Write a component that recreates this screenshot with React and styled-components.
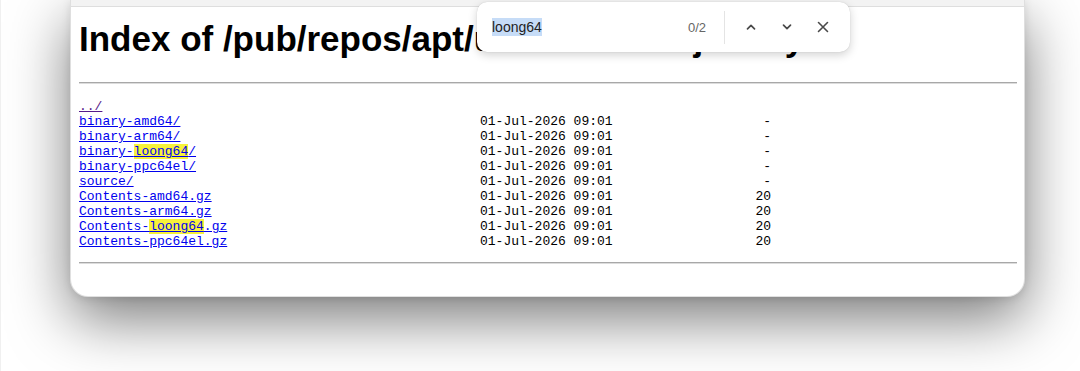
import React from 'react'
import styled, { createGlobalStyle } from 'styled-components'

const GlobalStyle = createGlobalStyle`
	html, body {
		margin: 0;
		padding: 0;
		background: #ffffff;
	}
`

const entries = [
	{ name: '../', visited: true },
	{ name: 'binary-amd64/', date: '01-Jul-2026 09:01', size: '-' },
	{ name: 'binary-arm64/', date: '01-Jul-2026 09:01', size: '-' },
	{ name: 'binary-', match: 'loong64', rest: '/', date: '01-Jul-2026 09:01', size: '-' },
	{ name: 'binary-ppc64el/', date: '01-Jul-2026 09:01', size: '-' },
	{ name: 'source/', date: '01-Jul-2026 09:01', size: '-' },
	{ name: 'Contents-amd64.gz', date: '01-Jul-2026 09:01', size: '20' },
	{ name: 'Contents-arm64.gz', date: '01-Jul-2026 09:01', size: '20' },
	{ name: 'Contents-', match: 'loong64', rest: '.gz', date: '01-Jul-2026 09:01', size: '20' },
	{ name: 'Contents-ppc64el.gz', date: '01-Jul-2026 09:01', size: '20' },
]

const ChevronUp = () => (
	<svg width="14" height="14" viewBox="0 0 14 14" fill="none">
		<path d="M3.5 8.8 L7 5.3 L10.5 8.8" stroke="#4a4a4a" strokeWidth="1.7" strokeLinecap="round" strokeLinejoin="round"/>
	</svg>
)

const ChevronDown = () => (
	<svg width="14" height="14" viewBox="0 0 14 14" fill="none">
		<path d="M3.5 5.2 L7 8.7 L10.5 5.2" stroke="#4a4a4a" strokeWidth="1.7" strokeLinecap="round" strokeLinejoin="round"/>
	</svg>
)

const CloseIcon = () => (
	<svg width="14" height="14" viewBox="0 0 14 14" fill="none">
		<path d="M2.5 2.5 L11.5 11.5 M11.5 2.5 L2.5 11.5" stroke="#4a4a4a" strokeWidth="1.6" strokeLinecap="round"/>
	</svg>
)

const App = () => {
	return (
		<Screen>
			<GlobalStyle/>
			<Window>
				<TopStrip/>
				<Page>
					<Heading>Index of /pub/repos/apt/ubuntu/dists/jammy/</Heading>
					<Rule/>
					<Listing>
						{entries.map((e, i) => (
							<Row key={i}>
								<Name>
									<FileLink href="#" $visited={e.visited}>
										{e.name}
										{e.match && <Hit>{e.match}</Hit>}
										{e.rest}
									</FileLink>
								</Name>
								<Date>{e.date}</Date>
								<Size>{e.size}</Size>
							</Row>
						))}
					</Listing>
					<Rule $gap={13}/>
				</Page>
			</Window>
			<FindBar>
				<Query><Selected>loong64</Selected></Query>
				<Count>0/2</Count>
				<Divider/>
				<IconButton><ChevronUp/></IconButton>
				<IconButton><ChevronDown/></IconButton>
				<IconButton><CloseIcon/></IconButton>
			</FindBar>
		</Screen>
	)
}

const Screen = styled.div`
	position: relative;
	width: 1080px;
	height: 371px;
	overflow: hidden;
	background: #ffffff;
	border-left: 1px solid #f0f0f0;
	box-sizing: border-box;
`

const Window = styled.div`
	margin-left: 69px;
	width: 955px;
	height: 297px;
	box-sizing: border-box;
	background: #ffffff;
	border: 1px solid rgba(0, 0, 0, 0.12);
	border-top: none;
	border-radius: 0 0 18px 18px;
	box-shadow: 0 22px 60px rgba(0, 0, 0, 0.52), 0 2px 8px rgba(0, 0, 0, 0.1);
	display: flex;
	flex-direction: column;
`

const TopStrip = styled.div`
	height: 6px;
	background: #f3f3f3;
	border-bottom: 1px solid #dedede;
`

const Page = styled.div`
	padding: 0 7px 0 8px;
	display: flex;
	flex-direction: column;
`

const Heading = styled.h1`
	margin: 12px 0 0;
	font-family: "Liberation Sans", Arial, sans-serif;
	font-size: 35px;
	line-height: 40px;
	font-weight: 700;
	color: #000;
	white-space: nowrap;
	overflow: hidden;
`

const Rule = styled.div`
	margin-top: ${p => p.$gap ?? 23}px;
	height: 0;
	border-top: 1px solid #a8a8a8;
	border-bottom: 1px solid #dcdcdc;
`

const Listing = styled.div`
	margin-top: 15px;
	display: flex;
	flex-direction: column;
	font-family: "Liberation Mono", "DejaVu Sans Mono", monospace;
	font-size: 13px;
	line-height: 15px;
	color: #000;
`

const Row = styled.div`
	display: grid;
	grid-template-columns: 401px 133px 158px;
	height: 15px;
	white-space: pre;
`

const Name = styled.span``

const FileLink = styled.a`
	color: ${p => (p.$visited ? '#551a8b' : '#0000ee')};
	text-decoration: underline;
`

const Hit = styled.mark`
	background: #f7f23a;
	color: inherit;
`

const Date = styled.span``

const Size = styled.span`
	text-align: right;
`

const FindBar = styled.div`
	position: absolute;
	left: 476px;
	top: 2px;
	width: 373px;
	height: 50px;
	box-sizing: border-box;
	background: #ffffff;
	border-radius: 10px;
	box-shadow: 0 3px 10px rgba(0, 0, 0, 0.18), 0 0 1px rgba(0, 0, 0, 0.2);
	display: flex;
	align-items: center;
	padding: 0 9px 0 15px;
	font-family: "Liberation Sans", Arial, sans-serif;
`

const Query = styled.div`
	flex: 1;
	font-size: 14px;
	color: #222;
`

const Selected = styled.span`
	background: #c6dcf7;
	padding: 1px 0;
`

const Count = styled.span`
	font-size: 13px;
	color: #666;
	margin-right: 18px;
`

const Divider = styled.div`
	width: 1px;
	height: 33px;
	background: #e4e4e4;
	margin-right: 8px;
`

const IconButton = styled.div`
	width: 36px;
	height: 36px;
	display: flex;
	align-items: center;
	justify-content: center;
`

export default App
